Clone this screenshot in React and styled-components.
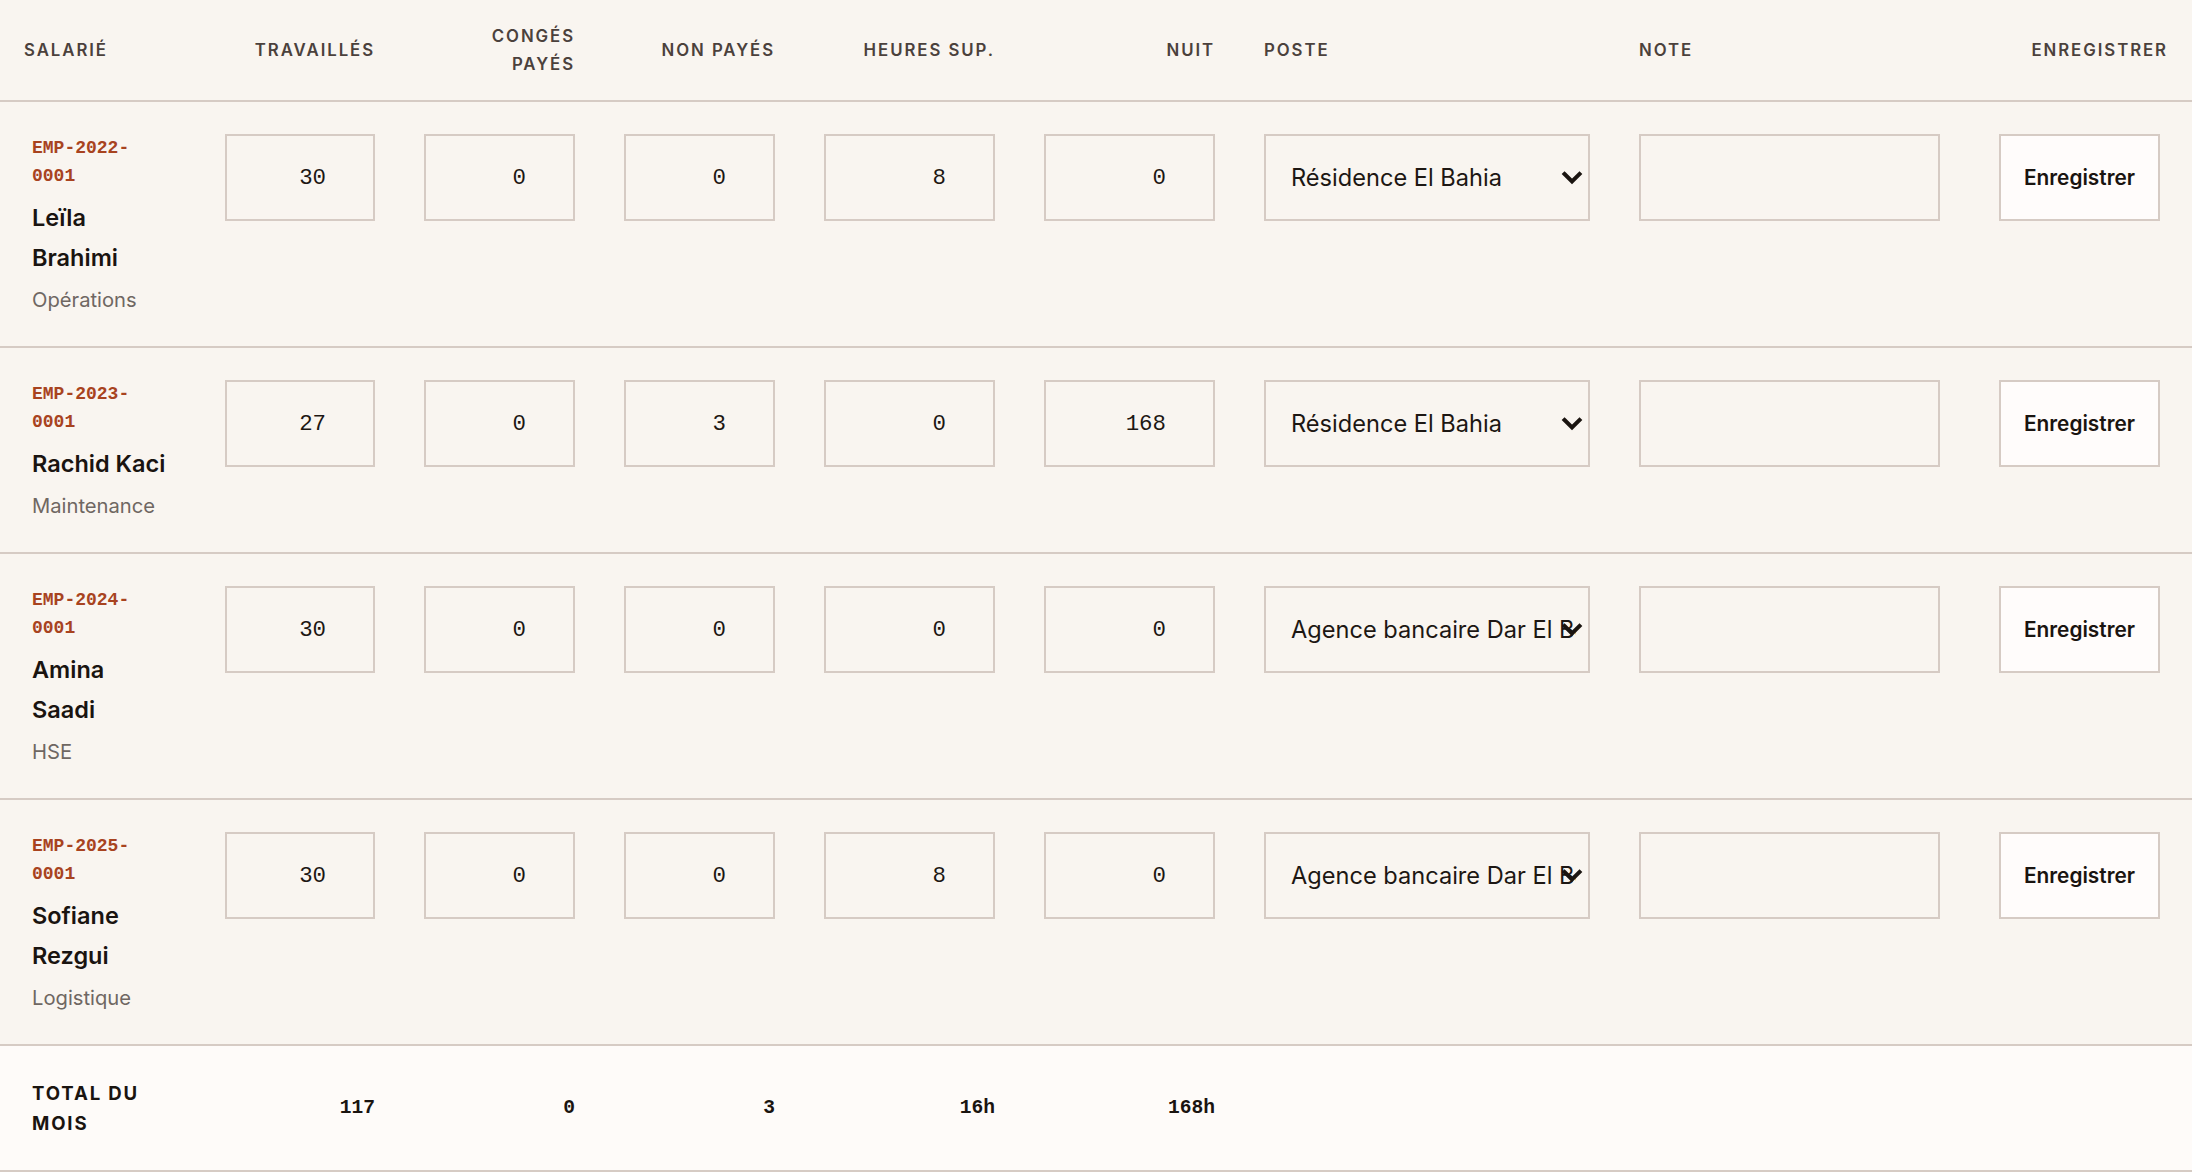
import React from "react";
import styled, { createGlobalStyle } from "styled-components";

const GlobalStyle = createGlobalStyle`
  html, body {
    margin: 0;
    padding: 0;
    background: #f9f5f0;
  }
  body {
    font-family: Inter, "Liberation Sans", Arial, sans-serif;
    color: #1d1713;
  }
  * {
    box-sizing: border-box;
  }
`;

const COLUMNS = "152px 150px 151px 151px 171px 171px 326px 301px 1fr";

const Table = styled.div`
  width: 100%;
  display: flex;
  flex-direction: column;
`;

const Row = styled.div`
  display: grid;
  grid-template-columns: ${COLUMNS};
  column-gap: 49px;
  padding: 32px 24px;
  border-bottom: 2px solid #d6cbc4;
  align-items: start;
`;

const HeadRow = styled(Row)`
  padding: 22px 24px;
  align-items: center;
`;

const TotalRow = styled(Row)`
  background: #fefbf9;
  align-items: center;
`;

const HeadCell = styled.div`
  font-size: 16.8px;
  line-height: 28px;
  font-weight: 600;
  letter-spacing: 0.115em;
  text-transform: uppercase;
  color: #4b413c;
  text-align: ${({ $align }) => $align || "left"};
`;

const Identity = styled.div`
  padding-left: 8px;
  max-width: 144px;
  display: flex;
  flex-direction: column;
`;

const EmpId = styled.div`
  font-family: "Liberation Mono", "DejaVu Sans Mono", monospace;
  font-size: 18px;
  line-height: 28px;
  font-weight: 700;
  color: #a8431f;
`;

const EmpName = styled.div`
  margin-top: 8px;
  font-size: 23.5px;
  line-height: 40px;
  font-weight: 600;
  color: #1a1410;
`;

const EmpDept = styled.div`
  margin-top: 8px;
  font-size: 20.2px;
  line-height: 28px;
  color: #6f6762;
`;

const fieldBase = `
  width: 100%;
  height: 87px;
  border: 2px solid #d6cbc4;
  background: transparent;
  border-radius: 0;
  outline: none;
  color: #1d1713;
  margin: 0;
`;

const NumberInput = styled.input`
  ${fieldBase}
  font-family: "Liberation Mono", "DejaVu Sans Mono", monospace;
  font-size: 22.4px;
  text-align: right;
  padding: 0 47px 0 16px;
  -moz-appearance: textfield;

  &::-webkit-outer-spin-button,
  &::-webkit-inner-spin-button {
    -webkit-appearance: none;
    margin: 0;
  }
`;

const SelectWrap = styled.div`
  position: relative;
  width: 100%;
`;

const Select = styled.select`
  ${fieldBase}
  appearance: none;
  -webkit-appearance: none;
  font-family: Inter, "Liberation Sans", Arial, sans-serif;
  font-size: 23.6px;
  padding: 0 12px 0 25px;
`;

const Chevron = styled.svg`
  position: absolute;
  right: 6px;
  top: 50%;
  width: 24px;
  height: 24px;
  transform: translateY(-50%);
  pointer-events: none;
`;

const NoteInput = styled.input`
  ${fieldBase}
  font-family: Inter, "Liberation Sans", Arial, sans-serif;
  font-size: 20px;
  padding: 0 20px;
`;

const SaveCell = styled.div`
  display: flex;
  justify-content: center;
  padding-left: 2px;
`;

const SaveButton = styled.button`
  width: 161px;
  height: 87px;
  border: 2px solid #d6cbc4;
  background: #fffcfb;
  border-radius: 0;
  font-family: Inter, "Liberation Sans", Arial, sans-serif;
  font-size: 20.8px;
  font-weight: 600;
  color: #1a1410;
  cursor: pointer;
`;

const TotalLabel = styled.div`
  padding-left: 8px;
  font-size: 18.6px;
  line-height: 30px;
  font-weight: 700;
  letter-spacing: 0.1em;
  text-transform: uppercase;
  color: #1a1410;
  max-width: 150px;
`;

const TotalValue = styled.div`
  font-family: "Liberation Mono", "DejaVu Sans Mono", monospace;
  font-size: 19.6px;
  font-weight: 700;
  text-align: right;
  color: #1a1410;
`;

const employees = [
  {
    id: ["EMP-2022-", "0001"],
    name: "Leïla Brahimi",
    dept: "Opérations",
    values: [30, 0, 0, 8, 0],
    site: "Résidence El Bahia",
  },
  {
    id: ["EMP-2023-", "0001"],
    name: "Rachid Kaci",
    dept: "Maintenance",
    values: [27, 0, 3, 0, 168],
    site: "Résidence El Bahia",
  },
  {
    id: ["EMP-2024-", "0001"],
    name: "Amina Saadi",
    dept: "HSE",
    values: [30, 0, 0, 0, 0],
    site: "Agence bancaire Dar El Beida",
  },
  {
    id: ["EMP-2025-", "0001"],
    name: "Sofiane Rezgui",
    dept: "Logistique",
    values: [30, 0, 0, 8, 0],
    site: "Agence bancaire Dar El Beida",
  },
];

const sites = ["Résidence El Bahia", "Agence bancaire Dar El Beida"];

function EmployeeRow({ emp }) {
  return (
    <Row>
      <Identity>
        <EmpId>
          {emp.id[0]}
          <wbr />
          {emp.id[1]}
        </EmpId>
        <EmpName>{emp.name}</EmpName>
        <EmpDept>{emp.dept}</EmpDept>
      </Identity>
      {emp.values.map((v, i) => (
        <NumberInput key={i} type="number" defaultValue={v} />
      ))}
      <SelectWrap>
        <Select defaultValue={emp.site}>
          {sites.map((s) => (
            <option key={s} value={s}>
              {s}
            </option>
          ))}
        </Select>
        <Chevron viewBox="0 0 24 24" fill="none">
          <path
            d="M4.5 8l7.5 7.5 7.5-7.5"
            stroke="#1a1410"
            strokeWidth="4"
            strokeLinecap="square"
            strokeLinejoin="miter"
          />
        </Chevron>
      </SelectWrap>
      <NoteInput type="text" />
      <SaveCell>
        <SaveButton>Enregistrer</SaveButton>
      </SaveCell>
    </Row>
  );
}

export default function App() {
  return (
    <>
      <GlobalStyle />
      <Table>
        <HeadRow>
          <HeadCell>Salarié</HeadCell>
          <HeadCell $align="right">Travaillés</HeadCell>
          <HeadCell $align="right">
            Congés
            <br />
            payés
          </HeadCell>
          <HeadCell $align="right">Non payés</HeadCell>
          <HeadCell $align="right">Heures sup.</HeadCell>
          <HeadCell $align="right">Nuit</HeadCell>
          <HeadCell>Poste</HeadCell>
          <HeadCell>Note</HeadCell>
          <HeadCell $align="right">Enregistrer</HeadCell>
        </HeadRow>
        {employees.map((emp) => (
          <EmployeeRow key={emp.id.join("")} emp={emp} />
        ))}
        <TotalRow>
          <TotalLabel>Total du mois</TotalLabel>
          <TotalValue>117</TotalValue>
          <TotalValue>0</TotalValue>
          <TotalValue>3</TotalValue>
          <TotalValue>16h</TotalValue>
          <TotalValue>168h</TotalValue>
        </TotalRow>
      </Table>
    </>
  );
}
